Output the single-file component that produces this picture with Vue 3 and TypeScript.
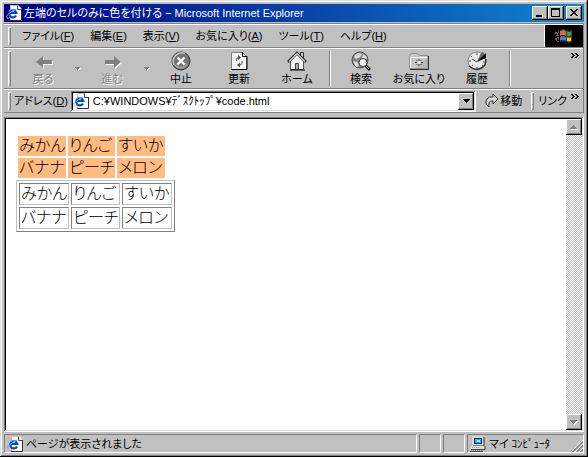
<script setup lang="ts">
interface MenuEntry { label: string; key: string }
interface Tool { id: string; label: string; disabled?: boolean; drop?: boolean; endGroup?: boolean }

const menus: MenuEntry[] = [
  { label: 'ファイル', key: 'F' },
  { label: '編集', key: 'E' },
  { label: '表示', key: 'V' },
  { label: 'お気に入り', key: 'A' },
  { label: 'ツール', key: 'T' },
  { label: 'ヘルプ', key: 'H' },
]

const tools: Tool[] = [
  { id: 'back', label: '戻る', disabled: true, drop: true },
  { id: 'forward', label: '進む', disabled: true, drop: true },
  { id: 'stop', label: '中止' },
  { id: 'refresh', label: '更新' },
  { id: 'home', label: 'ホーム', endGroup: true },
  { id: 'search', label: '検索' },
  { id: 'favorites', label: 'お気に入り' },
  { id: 'history', label: '履歴', endGroup: true },
]

const rows: string[][] = [
  ['みかん', 'りんご', 'すいか'],
  ['バナナ', 'ピーチ', 'メロン'],
]
const address = 'C:¥WINDOWS¥ﾃﾞｽｸﾄｯﾌﾟ¥code.html'
</script>

<template>
  <svg class="defs" aria-hidden="true">
    <symbol id="ie-page" viewBox="0 0 16 16">
      <path d="M4 0h8l4 4v12H4z" fill="#fff" />
      <path d="M4.5 15.5V.5h7" fill="none" stroke="#c0c0c0" />
      <path d="M11.5 .5v4h4" fill="#e8e8e8" stroke="#404040" />
      <path d="M15.5 4v11.5H4" fill="none" stroke="#303030" />
      <path d="M10 10.5a3.600 3.600 0 1 1 .3-2.500H4" fill="none" stroke="#0848c8" stroke-width="2.200" />
      <path d="M3 6q2.500-2.500 5-1" fill="none" stroke="#38a8f0" />
      <path d="M1.500 13Q-1 12 3 8.500T10.500 4" fill="none" stroke="#68b8f0" />
      <path d="M1 13q1 1 3-1" fill="none" stroke="#e8b830" />
    </symbol>
    <symbol id="chevrons" viewBox="0 0 8 5">
      <path d="M0 0h2v1h1v1h1v1H3v1H2v1H0V4h1V3h1V2H1V1H0zM4 0h2v1h1v1h1v1H7v1H6v1H4V4h1V3h1V2H5V1H4z" />
    </symbol>
    <symbol id="caret-down" viewBox="0 0 7 4"><path d="M0 0h7v1H6v1H5v1H4v1H3V3H2V2H1V1H0z" /></symbol>
  </svg>

  <div class="window">
    <header class="titlebar">
      <svg class="icon16"><use href="#ie-page" /></svg>
      <h1>左端のセルのみに色を付ける − Microsoft Internet Explorer</h1>
      <div class="window-buttons">
        <button type="button" aria-label="最小化"><svg width="12" height="10"><path d="M2 7h6v2H2z" /></svg></button>
        <button type="button" aria-label="最大化"><svg width="12" height="10"><path d="M1 0h9v9H1zM2 2v6h7V2z" fill-rule="evenodd" /></svg></button>
        <button type="button" class="close" aria-label="閉じる"><svg width="12" height="10"><path d="M2 1h2v1h1v1h2V2h1V1h2v1H9v1H8v1H7v1h1v1h1v1h1v1H8V7H7V6H5v1H4v1H2V7h1V6h1V5h1V4H4V3H3V2H2z" /></svg></button>
      </div>
    </header>

    <div class="rebar">
      <div class="band menu-band">
        <nav class="menu">
          <span class="grip"></span>
          <button v-for="m in menus" :key="m.key" type="button">{{ m.label }}(<u>{{ m.key }}</u>)</button>
        </nav>
        <div class="brand">
          <svg width="18" height="16" viewBox="0 0 18 16">
            <path d="M5 3q3-2 6 0v5q-3-2-6 0z" fill="#d86848" />
            <path d="M12 3q2 1 4 0v5q-2 1-4 0z" fill="#40a048" />
            <path d="M5 9q3-2 6 0v4q-3-2-6 0z" fill="#4878d0" />
            <path d="M12 9q2 1 4 0v4q-2 1-4 0z" fill="#f0c830" />
            <path d="M5 2.500q4-2 6.500 0t5 0v11q-3 2-5 0t-6.500 0M11.500 3v11" fill="none" stroke="#304838" />
            <path d="M0 4h2v2H0zM3 3h1v2H3zM1 7h3v1H1zM0 10h2v2H0zM3 10h1v2H3zM2 13h2v1H2z" fill="#a04848" />
            <path d="M2 5h1v2H2zM2 9h2v1H2zM1 12h1v1H1z" fill="#4868a0" />
          </svg>
        </div>
      </div>

      <div class="band tool-band">
        <span class="grip"></span>
        <template v-for="t in tools" :key="t.id">
          <button type="button" class="tool" :disabled="t.disabled">
            <svg width="20" height="20" viewBox="0 0 20 20">
              <template v-if="t.id === 'back'">
                <path d="M4 12l7-6v4h9v4h-9v4z" fill="#fff" />
                <path d="M3 11l7-6v4h9v4h-9v4z" fill="#808080" />
              </template>
              <template v-else-if="t.id === 'forward'">
                <path d="M20 12l-7-6v4H4v4h9v4z" fill="#fff" />
                <path d="M19 11l-7-6v4H3v4h9v4z" fill="#808080" />
              </template>
              <template v-else-if="t.id === 'stop'">
                <circle cx="10" cy="10" r="9" fill="#747474" stroke="#303030" />
                <path d="M3 14A8.500 8.500 0 0 1 14 2.500" fill="none" stroke="#c8c8c8" stroke-width="1.500" />
                <path d="M4 14q6 6 12-1" fill="none" stroke="#a0a0a0" stroke-width="2" />
                <path d="M6.500 6.500l7 7m0-7l-7 7" stroke="#fff" stroke-width="2.400" />
              </template>
              <template v-else-if="t.id === 'refresh'">
                <path d="M2.500 1.500h11l4 4v13h-15z" fill="#f4f4f4" stroke="#808080" />
                <path d="M13.500 1v4.500H18v13H2" fill="none" stroke="#000" />
                <path d="M7.500 10V8.500Q7.500 6.500 10 6.500M13 10v2q0 2-3 2" fill="none" stroke="#505050" />
                <path d="M9 4l3 2.500L9 9zM11 11.500L8 14l3 2.500z" fill="#505050" />
              </template>
              <template v-else-if="t.id === 'home'">
                <path d="M13.500 6V1.500h3V9" fill="#d0d0d0" stroke="#303030" />
                <path d="M3.500 10L10 3.500l6.500 6.500v8.500h-13z" fill="#f4f4f4" stroke="#505050" />
                <path d="M1 11l9-9 9 9" fill="none" stroke="#202020" stroke-width="2.500" />
                <path d="M2 10.500l8-8 8 8" fill="none" stroke="#d8d8d8" stroke-width="1.200" />
                <path d="M8.500 18v-5.500h3V18" fill="#b0b0b0" stroke="#404040" />
                <path d="M3 19h15" stroke="#000" />
              </template>
              <template v-else-if="t.id === 'search'">
                <circle cx="9" cy="9" r="8" fill="#888" stroke="#505050" />
                <path d="M3 5l4-3 4 1-2 3-4 2zM12 3l4 3-1 3-4-2zM2 10l4 1 2 4-3 1z" fill="#ddd" />
                <path d="M14 14l5 5" stroke="#000" stroke-width="3" />
                <path d="M14 14l4 4" stroke="#b0b0b0" />
                <circle cx="12" cy="11.500" r="4" fill="#f8f8f8" stroke="#404040" />
              </template>
              <template v-else-if="t.id === 'favorites'">
                <path d="M.5 17.500v-13l2-2h6l2 2h8v13z" fill="#c8c8c8" stroke="#909090" />
                <path d="M1.500 17V6.500h17" fill="none" stroke="#fff" />
                <path d="M7 17L19 6v11z" fill="#acacac" opacity=".6" />
                <path d="M19.500 5v13.500H1" fill="none" stroke="#303030" />
                <path d="M10 8v2m0 3v2M6 11.500h2m4 0h2M7.500 9l1 1m3 3l1 1m0-5l-1 1m-3 3l-1 1" stroke="#404040" />
                <path d="M9 10.500h2v2H9z" fill="#f4f4f4" />
              </template>
              <template v-else>
                <circle cx="10" cy="10" r="9" fill="#e8e8e8" stroke="#888" />
                <path d="M2 15q8 7 16-1l1-6" fill="none" stroke="#303030" stroke-width="1.500" />
                <path d="M10 2v2M2 10h2M4 5l1 1M5 15l1-1M10 16v2M15 14l1 1M16 11h2" stroke="#505050" />
                <path d="M10 11l4-9 2-1 2 3-1 2z" fill="#606060" />
                <path d="M10 11l9-9v5z" fill="#000" />
                <path d="M5 8l5 3" stroke="#404040" />
              </template>
            </svg>
            <span>{{ t.label }}</span>
          </button>
          <button v-if="t.drop" type="button" class="tool-drop" disabled :aria-label="t.label + 'の一覧'">
            <svg width="6" height="4"><path d="M1 1h5v1H5v1H4v1H3V3H2V2H1z" fill="#fff" /><path d="M0 0h5v1H4v1H3v1H2V2H1V1H0z" fill="#808080" /></svg>
          </button>
          <span v-if="t.endGroup" class="divider"></span>
        </template>
        <button type="button" class="more" aria-label="その他のボタン"><svg width="8" height="5"><use href="#chevrons" /></svg></button>
      </div>

      <div class="band address-band">
        <span class="grip"></span>
        <label for="address">アドレス(<u>D</u>)</label>
        <div class="combo">
          <svg class="icon16"><use href="#ie-page" /></svg>
          <input id="address" type="text" :value="address" spellcheck="false">
          <button type="button" class="raised" aria-label="アドレスの一覧"><svg width="7" height="4"><use href="#caret-down" /></svg></button>
        </div>
        <button type="button" class="go">
          <svg width="14" height="16" viewBox="0 0 14 16">
            <path d="M4 14Q-1 10 2 6q2-3 6-2V1l5 5-5 5V8Q3 7 4 14z" fill="#d8d8d8" stroke="#303030" />
          </svg>
          移動
        </button>
        <div class="links">
          <span class="grip"></span>
          <button type="button">リンク</button>
          <button type="button" class="more" aria-label="その他のリンク"><svg width="8" height="5"><use href="#chevrons" /></svg></button>
        </div>
      </div>
    </div>

    <div class="view">
      <main class="page">
        <table v-for="kind in ['filled', 'ruled']" :key="kind" :class="kind">
          <tbody>
            <tr v-for="(row, i) in rows" :key="i">
              <td v-for="cell in row" :key="cell">{{ cell }}</td>
            </tr>
          </tbody>
        </table>
      </main>
      <div class="scrollbar">
        <button type="button" class="raised" disabled aria-label="上へスクロール">
          <svg width="8" height="5"><path d="M4 1h1v1h1v1h1v1h1v1H1V4h1V3h1V2h1z" fill="#fff" /><path d="M3 0h1v1h1v1h1v1h1v1H0V3h1V2h1V1h1z" fill="#808080" /></svg>
        </button>
        <button type="button" class="raised" disabled aria-label="下へスクロール">
          <svg width="8" height="5"><path d="M1 1h7v1H7v1H6v1H5v1H4V4H3V3H2V2H1z" fill="#fff" /><path d="M0 0h7v1H6v1H5v1H4v1H3V3H2V2H1V1H0z" fill="#808080" /></svg>
        </button>
      </div>
    </div>

    <footer class="status">
      <div class="panel message"><svg class="icon16"><use href="#ie-page" /></svg>ページが表示されました</div>
      <div class="panel small"></div>
      <div class="panel small"></div>
      <div class="panel zone">
        <svg width="16" height="16" viewBox="0 0 16 16">
          <path d="M2 0h11l1 1v9H2z" fill="#d8d8c8" />
          <path d="M14 1v9H3" fill="none" stroke="#303030" />
          <path d="M4 2h8v6H4z" fill="#083080" />
          <path d="M5 3h6v4H5z" fill="#20b8d0" />
          <path d="M7 4h3v2H7z" fill="#a0e8ff" />
          <path d="M1 10h13v3H1z" fill="#e0e0d0" />
          <path d="M1 13.500h14V10M0 15.500h13" fill="none" stroke="#404040" />
          <path d="M2 11.500h8M1 14.500h12" stroke="#909090" stroke-dasharray="1 1" />
        </svg>
        マイ ｺﾝﾋﾟｭｰﾀ
        <svg class="size-grip" width="12" height="12" viewBox="0 0 12 12">
          <path d="M0 12L12 0M4 12l8-8M8 12l4-4" stroke="#fff" />
          <path d="M1.500 12L12 1.500M5.500 12L12 5.500M9.500 12L12 9.500" stroke="#808080" stroke-width="1.500" />
        </svg>
      </div>
    </footer>
  </div>
</template>

<style>
html, body, #app { height: 100%; }
body { margin: 0; }
</style>

<style scoped>
* { box-sizing: border-box; }
.defs { position: absolute; width: 0; height: 0; }
.window {
  display: flex;
  flex-direction: column;
  height: 100%;
  min-height: 280px;
  padding: 2px;
  overflow: hidden;
  background: #c0c0c0;
  box-shadow: inset -1px -1px #000, inset 1px 1px #dfdfdf, inset -2px -2px #808080, inset 2px 2px #fff;
  color: #000;
  font: 11px/16px "Liberation Sans", "Noto Sans CJK JP", sans-serif;
  font-feature-settings: "palt";
  white-space: nowrap;
}
button, input {
  margin: 0;
  padding: 0;
  border: 0;
  border-radius: 0;
  background: none;
  color: inherit;
  font: inherit;
  font-feature-settings: inherit;
}
svg { display: block; flex: none; }
u { text-underline-offset: 1px; }
.icon16 { width: 16px; height: 16px; }

.titlebar {
  display: flex;
  align-items: center;
  gap: 2px;
  height: 18px;
  flex: none;
  margin: 2px 2px 0;
  padding: 0 2px;
  background: linear-gradient(90deg, #000080, #1084d0);
  color: #fff;
}
.titlebar h1 { flex: 1; margin: 0; overflow: hidden; font-size: 11px; font-weight: 400; }
.window-buttons { display: flex; }
.window-buttons button, .raised {
  display: flex;
  align-items: center;
  justify-content: center;
  flex: none;
  width: 16px;
  height: 14px;
  background: #c0c0c0;
  box-shadow: inset -1px -1px #000, inset 1px 1px #fff, inset -2px -2px #808080;
}
.window-buttons .close { margin-left: 2px; }

.rebar { flex: none; margin: 1px 2px 0; border-top: 1px solid #808080; border-right: 1px solid #808080; }
.band {
  display: flex;
  align-items: center;
  border-top: 1px solid #fff;
  border-bottom: 1px solid #808080;
  padding-left: 4px;
}
.grip {
  flex: none;
  align-self: stretch;
  width: 3px;
  margin: 2px 0;
  background: #c0c0c0;
  box-shadow: inset 1px 1px #fff, inset -1px -1px #808080;
}
.menu-band { height: 24px; }
.menu { display: flex; flex: 1; align-items: center; align-self: stretch; }
.menu .grip { margin-right: 3px; }
.menu button { padding: 0 8px; }
.brand {
  display: flex;
  align-items: center;
  justify-content: center;
  align-self: stretch;
  width: 39px;
  border-left: 1px solid #fff;
  background: #000;
}
.tool-band { height: 41px; }
.tool-band .grip { margin-right: 3px; }
.tool {
  display: flex;
  flex-direction: column;
  align-items: center;
  flex: none;
  width: 58px;
}
.tool span { line-height: 16px; }
.tool:disabled span { color: #808080; text-shadow: 1px 1px #fff; }
.tool-drop { display: flex; justify-content: center; width: 11px; }
.divider {
  flex: none;
  align-self: stretch;
  width: 2px;
  margin: 2px 1px 2px 3px;
  border-left: 1px solid #808080;
  border-right: 1px solid #fff;
}
.more { align-self: flex-start; flex: none; margin: 4px 4px 0 auto; }

.address-band { height: 24px; }
.address-band label { margin: 0 3px; }
.combo {
  display: flex;
  align-items: center;
  flex: 1;
  min-width: 0;
  height: 21px;
  padding: 2px;
  background: #fff;
  box-shadow: inset -1px -1px #fff, inset 1px 1px #808080, inset -2px -2px #dfdfdf, inset 2px 2px #000;
}
.combo input { flex: 1; min-width: 0; margin-left: 4px; outline: 0; }
.combo .raised { height: 17px; }
.go { display: flex; align-items: center; gap: 1px; padding: 0 9px; }
.links { display: flex; align-items: center; align-self: stretch; }
.links .grip { margin-right: 4px; }
.links .more { margin-left: 4px; }

.view {
  display: flex;
  flex: 1;
  min-height: 0;
  margin: 4px 2px 0;
  padding: 2px;
  background: #fff;
  box-shadow: inset -1px -1px #fff, inset 1px 1px #808080, inset -2px -2px #dfdfdf, inset 2px 2px #000;
}
.page { flex: 1; min-width: 0; overflow: hidden; padding: 15px 10px; }
table { border-spacing: 2px; font-size: 16px; font-weight: 300; line-height: 18px; }
td { min-width: 48px; padding: 1px; }
td:nth-child(2) { min-width: 46px; }
.filled td { background: #ffbb80; }
.ruled { border: 1px solid; border-color: #c0c0c0 #808080 #808080 #c0c0c0; }
.ruled td { border: 1px solid; border-color: #808080 #c0c0c0 #c0c0c0 #808080; min-width: 50px; }
.ruled td:nth-child(2) { min-width: 48px; }
.scrollbar {
  display: flex;
  flex-direction: column;
  justify-content: space-between;
  width: 16px;
  background: repeating-conic-gradient(#fff 0 25%, #c0c0c0 0 50%) 0 0 / 2px 2px;
}
.scrollbar .raised { height: 16px; }

.status { display: flex; gap: 2px; flex: none; height: 19px; margin: 2px 2px; }
.panel {
  display: flex;
  align-items: center;
  padding: 0 2px;
  border: 1px solid;
  border-color: #808080 #fff #fff #808080;
}
.message { flex: 1; gap: 3px; }
.small { width: 22px; }
.zone { gap: 3px; width: 117px; }
.size-grip { align-self: flex-end; margin: 0 -2px 0 auto; }
</style>
